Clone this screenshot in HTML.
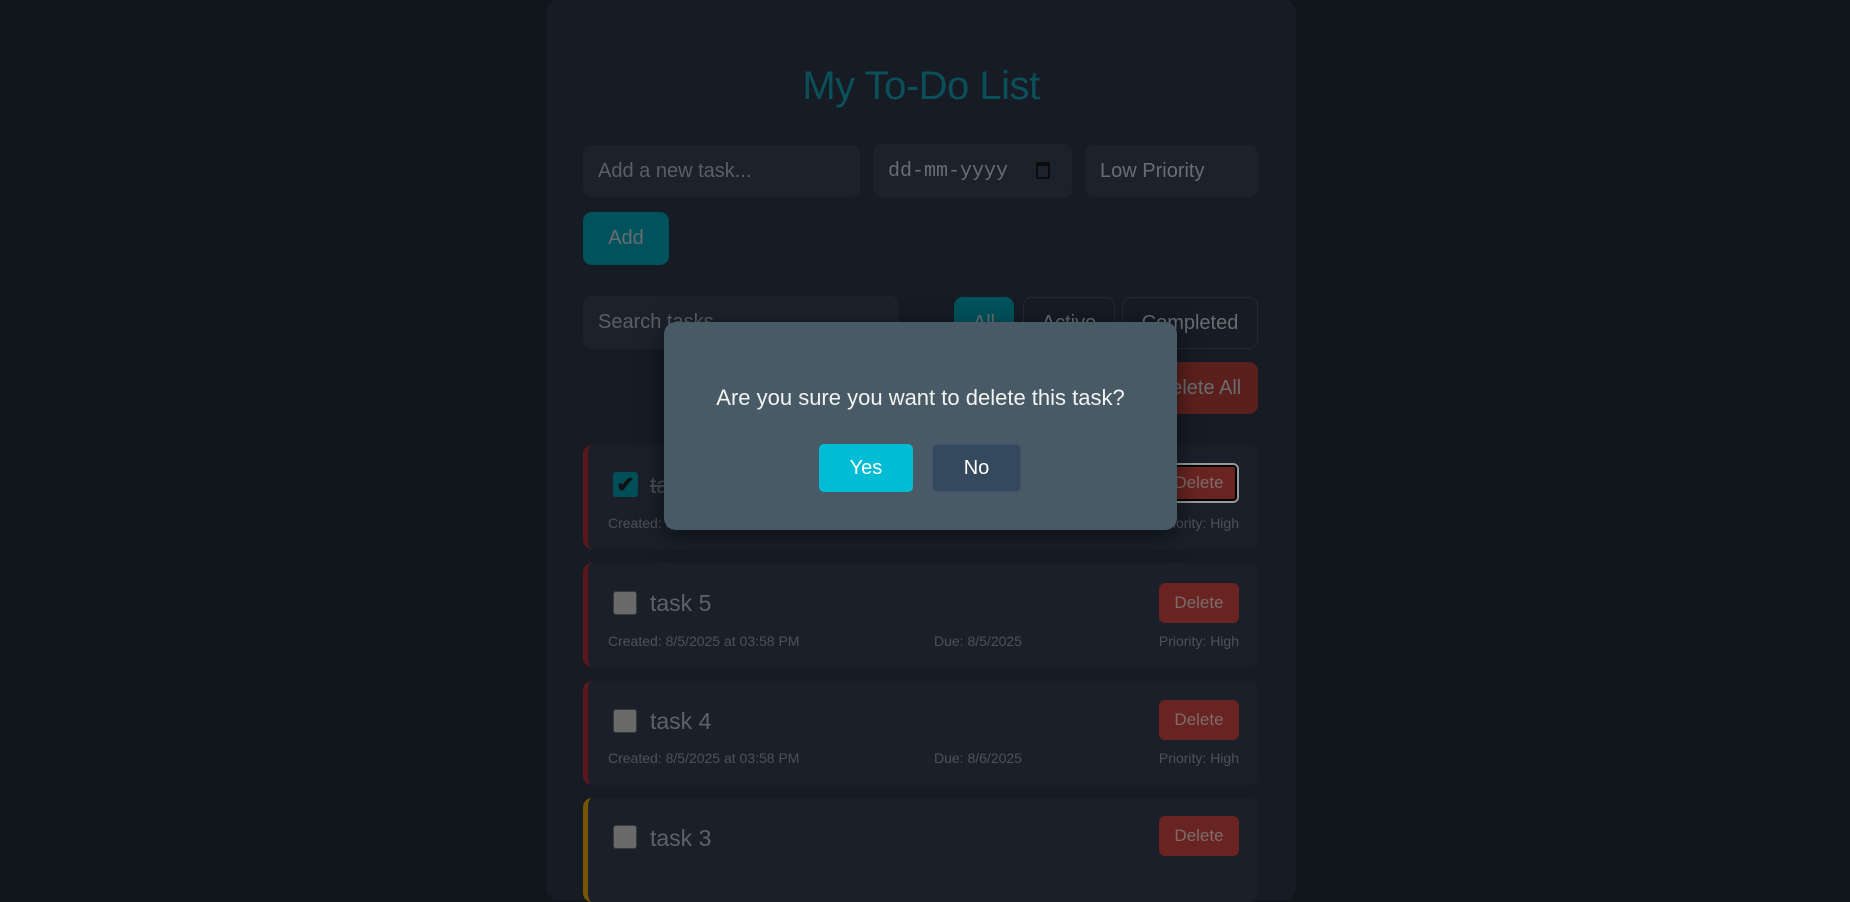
<!DOCTYPE html>
<html><head><meta charset="utf-8"><style>
*{box-sizing:border-box;margin:0;padding:0}
body{width:1850px;height:849px;overflow:hidden;background:#11161d;font-family:"Liberation Sans",sans-serif;position:relative}
.a{position:absolute}
.wrap{left:546px;top:0;width:750px;height:900px;background:#161b24;border-radius:12px}
h1{left:546px;width:750px;top:64px;text-align:center;font-weight:normal;font-size:40px;color:#0a4f59;letter-spacing:-0.5px}
.in{background:#1c222b;border-radius:9px;color:#5a5f65;font-size:20px;padding-left:15px;display:flex;align-items:center}
.btn{border-radius:9px;display:flex;align-items:center;justify-content:center;font-size:20px;color:#686d72}
.card{left:583px;width:675px;height:104px;background:#1a1f29;border-radius:9px;border-left:5px solid #5a181c}
.cb{width:24px;height:24px;border-radius:3px;background:#6a6a6a;border:1px solid #3a3a3a}
.tt{font-size:23px;color:#5c636a}
.meta{font-size:14px;color:#4c5259}
.pr{right:611px;text-align:right}
.del{width:80px;height:40px;background:#692421;border-radius:6px;color:#7c6c6c;font-size:17px;display:flex;align-items:center;justify-content:center}
</style></head><body>
<div class="a wrap"></div>
<h1 class="a">My To-Do List</h1>
<div class="a in" style="left:583px;top:145px;width:277px;height:52px">Add a new task...</div>
<div class="a in" style="left:873px;top:144px;width:199px;height:54px;font-family:'Liberation Mono',monospace;color:#686d72">dd-mm-yyyy<span style="position:absolute;left:163px;top:18px;width:14px;height:17px;border:2px solid #0c0c0c;border-top-width:4px;border-radius:2px"></span></div>
<div class="a in" style="left:1085px;top:145px;width:173px;height:52px;color:#686d72">Low Priority</div>
<div class="a btn" style="left:583px;top:212px;width:86px;height:53px;background:#00525c">Add</div>
<div class="a in" style="left:583px;top:296px;width:316px;height:53px">Search tasks...</div>
<div class="a btn" style="left:954px;top:297px;width:60px;height:52px;background:#00525c">All</div>
<div class="a btn" style="left:1023px;top:297px;width:92px;height:52px;border:1px solid #242a33">Active</div>
<div class="a btn" style="left:1122px;top:297px;width:136px;height:52px;border:1px solid #242a33">Completed</div>
<div class="a btn" style="left:1140px;top:362px;width:118px;height:52px;background:#5c201c">Delete All</div>

<div class="a card" style="top:445px"></div>
<div class="a" style="left:613px;top:472px;width:25px;height:25px;background:#004e58;border-radius:3px;color:#111;font-size:22px;line-height:25px;text-align:center;font-weight:bold">✔</div>
<div class="a tt" style="left:650px;top:472px;text-decoration:line-through;color:#474d53">task 6</div>
<div class="a meta" style="left:608px;top:515px">Created: 8/5/2025 at 03:58 PM</div>
<div class="a meta pr" style="top:515px">Priority: High</div>
<div class="a del" style="left:1159px;top:463px;border:2px solid #999;outline:2px solid #000;outline-offset:-4px">Delete</div>

<div class="a card" style="top:563px"></div>
<div class="a cb" style="left:613px;top:591px"></div>
<div class="a tt" style="left:650px;top:590px">task 5</div>
<div class="a del" style="left:1159px;top:583px">Delete</div>
<div class="a meta" style="left:608px;top:633px">Created: 8/5/2025 at 03:58 PM</div>
<div class="a meta" style="left:934px;top:633px">Due: 8/5/2025</div>
<div class="a meta pr" style="top:633px">Priority: High</div>

<div class="a card" style="top:681px"></div>
<div class="a cb" style="left:613px;top:709px"></div>
<div class="a tt" style="left:650px;top:708px">task 4</div>
<div class="a del" style="left:1159px;top:700px">Delete</div>
<div class="a meta" style="left:608px;top:750px">Created: 8/5/2025 at 03:58 PM</div>
<div class="a meta" style="left:934px;top:750px">Due: 8/6/2025</div>
<div class="a meta pr" style="top:750px">Priority: High</div>

<div class="a card" style="top:798px;border-left-color:#765700"></div>
<div class="a cb" style="left:613px;top:825px"></div>
<div class="a tt" style="left:650px;top:825px">task 3</div>
<div class="a del" style="left:1159px;top:816px">Delete</div>

<div class="a" style="left:664px;top:322px;width:513px;height:208px;background:#475a66;border-radius:12px;box-shadow:0 6px 24px rgba(0,0,0,.5)"></div>
<div class="a" style="left:664px;top:385px;width:513px;text-align:center;color:#f2f2f2;font-size:22px">Are you sure you want to delete this task?</div>
<div class="a btn" style="left:819px;top:444px;width:94px;height:48px;background:#00bcd4;color:#fff;border-radius:5px">Yes</div>
<div class="a btn" style="left:932px;top:444px;width:89px;height:48px;background:#34495e;color:#fff;border-radius:5px;border:1px solid #3f5366">No</div>
</body></html>
